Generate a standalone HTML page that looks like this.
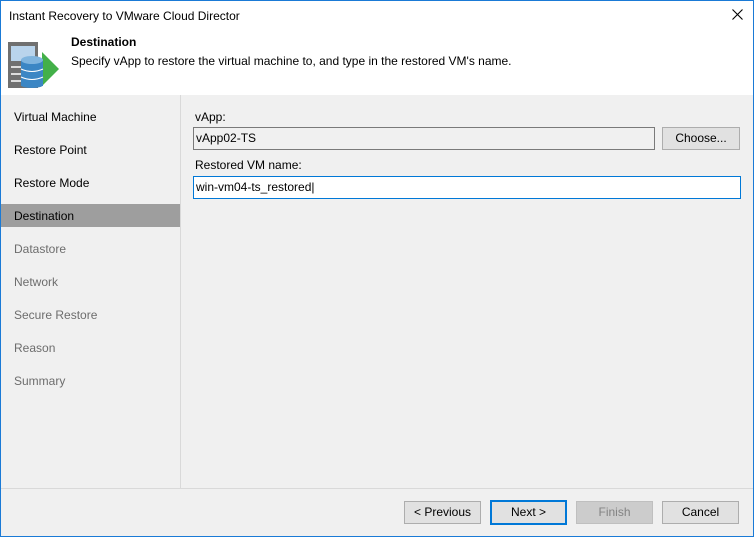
<!DOCTYPE html><html><head><style>
body{margin:0;width:754px;height:537px;position:relative;overflow:hidden;font-family:"Liberation Sans",sans-serif;font-size:12px;color:#000;background:#f0f0f0}
.a{position:absolute}
.nav{left:14px}
.btn{position:absolute;top:501px;height:21px;width:75px;border:1px solid #adadad;background:#e1e1e1;text-align:center;line-height:21px}
</style></head><body>
<div class="a" style="left:0;top:0;width:752px;height:535px;border:1px solid #1a7ad6"></div>
<div class="a" style="left:1px;top:1px;width:752px;height:94px;background:#fff"></div>
<div class="a" style="left:9px;top:9px">Instant Recovery to VMware Cloud Director</div>
<svg class="a" style="left:732px;top:9px" width="11" height="11"><path d="M0.5 0.5L10.5 10.5M10.5 0.5L0.5 10.5" stroke="#000" stroke-width="1.1"/></svg>
<svg class="a" style="left:8px;top:40px" width="54" height="50">
<rect x="0" y="2" width="30" height="46" fill="#707070"/>
<rect x="3" y="6" width="24" height="15" fill="#b9d4ec"/>
<rect x="3" y="26" width="14" height="2" fill="#ddd"/><rect x="3" y="33" width="14" height="2" fill="#ddd"/><rect x="3" y="40" width="14" height="2" fill="#ddd"/>
<polygon points="34,12 51,29 34,46" fill="#43b049"/>
<rect x="13" y="20" width="22" height="26" fill="#3b86c4"/>
<ellipse cx="24" cy="20" rx="11" ry="4" fill="#7fb4de"/>
<path d="M13 29 q11 5 22 0 M13 37 q11 5 22 0" stroke="#fff" fill="none"/>
<ellipse cx="24" cy="45" rx="11" ry="3" fill="#3b86c4"/>
</svg>
<div class="a" style="left:71px;top:35px;font-weight:bold">Destination</div>
<div class="a" style="left:71px;top:54px">Specify vApp to restore the virtual machine to, and type in the restored VM's name.</div>
<div class="a" style="left:180px;top:95px;width:1px;height:393px;background:#d9d9d9"></div>
<div class="a" style="left:1px;top:488px;width:752px;height:1px;background:#d9d9d9"></div>
<div class="a" style="left:1px;top:204px;width:179px;height:23px;background:#9e9e9e"></div>
<div class="a nav" style="top:110px">Virtual Machine</div>
<div class="a nav" style="top:143px">Restore Point</div>
<div class="a nav" style="top:176px">Restore Mode</div>
<div class="a nav" style="top:209px">Destination</div>
<div class="a nav" style="top:242px;color:#6d6d6d">Datastore</div>
<div class="a nav" style="top:275px;color:#6d6d6d">Network</div>
<div class="a nav" style="top:308px;color:#6d6d6d">Secure Restore</div>
<div class="a nav" style="top:341px;color:#6d6d6d">Reason</div>
<div class="a nav" style="top:374px;color:#6d6d6d">Summary</div>
<div class="a" style="left:195px;top:110px">vApp:</div>
<div class="a" style="left:193px;top:127px;width:458px;height:21px;border:1px solid #7a7a7a;background:#f0f0f0;line-height:21px;padding-left:2px">vApp02-TS</div>
<div class="btn" style="left:662px;top:127px;width:76px">Choose...</div>
<div class="a" style="left:195px;top:158px">Restored VM name:</div>
<div class="a" style="left:193px;top:176px;width:544px;height:21px;border:1px solid #0078d7;background:#fff;line-height:21px;padding-left:2px">win-vm04-ts_restored|</div>
<div class="btn" style="left:404px">&lt; Previous</div>
<div class="btn" style="left:490px;border:2px solid #0078d7;top:500px;width:73px">Next &gt;</div>
<div class="btn" style="left:576px;background:#ccc;border-color:#bfbfbf;color:#838383">Finish</div>
<div class="btn" style="left:662px">Cancel</div>
</body></html>
